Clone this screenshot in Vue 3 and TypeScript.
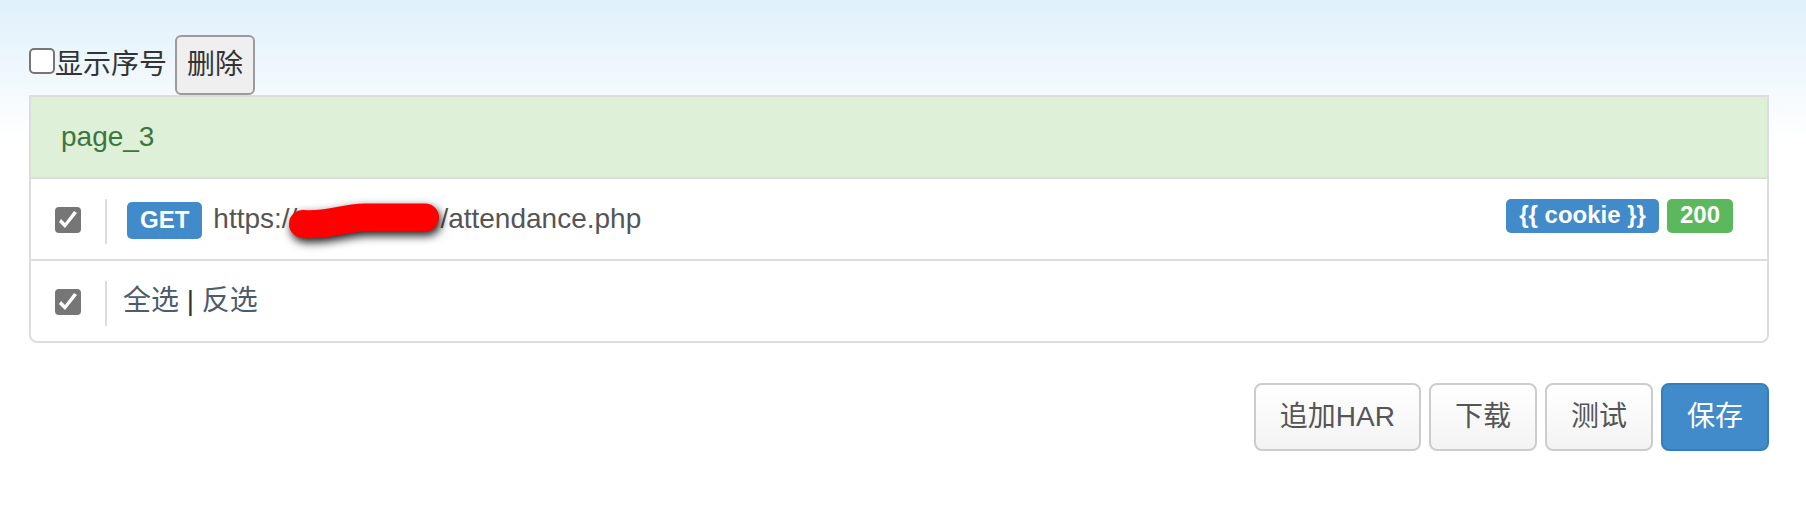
<script setup lang="ts">
import { computed, ref } from 'vue'

interface Entry {
  checked: boolean
  method: string
  scheme: string
  path: string
  variables: string[]
  status: number
}

const showIndex = ref(false)
const pageName = 'page_3'
const entries = ref<Entry[]>([
  {
    checked: true,
    method: 'GET',
    scheme: 'https://',
    path: '/attendance.php',
    variables: ['{{ cookie }}'],
    status: 200,
  },
])

const allChecked = computed({
  get: () => entries.value.every((e) => e.checked),
  set: (value: boolean) => setAll(value),
})

function setAll(value: boolean) {
  entries.value.forEach((e) => (e.checked = value))
}

function invert() {
  entries.value.forEach((e) => (e.checked = !e.checked))
}

function removeChecked() {
  entries.value = entries.value.filter((e) => !e.checked)
}
</script>

<template>
  <main class="editor">
    <div class="toolbar">
      <label class="toggle"><input v-model="showIndex" class="check" type="checkbox" /><span>显示序号</span></label>
      <button class="remove" type="button" @click="removeChecked">删除</button>
    </div>

    <section class="panel">
      <h1 class="row heading">{{ pageName }}</h1>

      <div v-for="(entry, i) in entries" :key="i" class="row">
        <span class="pick"><input v-model="entry.checked" class="check" type="checkbox" :aria-label="entry.method + ' ' + entry.path" /></span>
        <div class="request">
          <span class="badge method">{{ entry.method }}</span>
          <span class="url">
            <span>{{ entry.scheme }}</span>
            <span class="host">
              <svg class="marker" viewBox="0 0 160 60" aria-hidden="true">
                <path d="M20 35 C46 37 58 29 82 28.500 H142" />
              </svg>
            </span>
            <span>{{ entry.path }}</span>
          </span>
        </div>
        <div class="tags">
          <span v-for="name in entry.variables" :key="name" class="badge">{{ name }}</span>
          <span class="badge ok">{{ entry.status }}</span>
        </div>
      </div>

      <div class="row">
        <span class="pick"><input v-model="allChecked" class="check" type="checkbox" aria-label="全选" /></span>
        <div class="select-links">
          <a href="#" @click.prevent="setAll(true)">全选</a> | <a href="#" @click.prevent="invert">反选</a>
        </div>
      </div>
    </section>

    <div class="actions">
      <button class="btn" type="button">追加HAR</button>
      <button class="btn" type="button">下载</button>
      <button class="btn" type="button">测试</button>
      <button class="btn primary" type="button">保存</button>
    </div>
  </main>
</template>

<style>
body {
  background: #fff linear-gradient(#dff0fb, #fff 140px) no-repeat;
}
</style>

<style scoped>
.editor {
  padding: 35px 37px 60px 29px;
  min-height: 100vh;
  box-sizing: border-box;
  color: #333;
  font: 28px/40px "Liberation Sans", "Noto Sans CJK SC", sans-serif;
}

button {
  font: inherit;
  cursor: pointer;
}

.check {
  appearance: none;
  box-sizing: border-box;
  width: 26px;
  height: 26px;
  margin: 0;
  border: 2px solid #767676;
  border-radius: 5px;
  background: #fff;
}

.check:checked {
  border-width: 0;
  border-radius: 4px;
  background: #767676;
}

.check:checked::before {
  content: "";
  display: block;
  height: 26px;
  background: #fff;
  clip-path: polygon(4px 15px, 6px 12px, 10px 16px, 19px 4px, 22px 6px, 10px 21px);
}

.toolbar {
  display: flex;
  gap: 8px;
}

.toggle {
  display: flex;
  align-items: center;
}

.toggle .check {
  margin-bottom: 8px;
}

.remove {
  height: 60px;
  padding: 0 10px;
  border: 2px solid #9b9b9b;
  border-radius: 6px;
  background: #efefef;
  color: #333;
}

.panel {
  border: 2px solid #ddd;
  border-radius: 0 0 8px 8px;
  background: #fff;
}

.row {
  display: flex;
  padding: 20px 34px 20px 24px;
}

.row + .row {
  border-top: 2px solid #ddd;
}

.heading {
  margin: 0;
  padding: 20px 30px;
  background: #dff0d8;
  color: #3c763d;
  font-size: 28px;
  font-weight: 400;
}

.pick {
  display: flex;
  box-sizing: border-box;
  height: 45px;
  margin-bottom: -5px;
  padding: 8px 24px 0 0;
  border-right: 2px solid #ddd;
}

.request {
  display: flex;
  flex: 1;
  gap: 11px;
  padding-left: 20px;
  color: #555;
}

.badge {
  height: 34px;
  padding: 0 13px;
  border-radius: 5px;
  background: #428bca;
  color: #fff;
  font-size: 24px;
  font-weight: 700;
  line-height: 32px;
}

.method {
  height: 37px;
  margin-top: 3px;
  line-height: 36px;
}

.ok {
  background: #5cb85c;
}

.url {
  display: flex;
}

.host {
  position: relative;
  width: 143px;
}

.marker {
  position: absolute;
  top: -10px;
  left: -14px;
  width: 160px;
  height: 60px;
  overflow: visible;
  filter: drop-shadow(2px 4px 5px rgba(0, 0, 0, 0.9));
}

.marker path {
  fill: none;
  stroke: #f00;
  stroke-width: 28;
  stroke-linecap: round;
}

.tags {
  display: flex;
  gap: 8px;
}

.select-links {
  padding-left: 16px;
}

.select-links a {
  color: #4c5b6e;
  text-decoration: none;
}

.actions {
  display: flex;
  justify-content: flex-end;
  gap: 8px;
  margin-top: 40px;
}

.btn {
  height: 68px;
  padding: 0 24px;
  border: 2px solid #ccc;
  border-radius: 8px;
  background: linear-gradient(#fff, #f3f3f3);
  color: #555;
}

.primary {
  border-color: #357ebd;
  background: #428bca;
  color: #fff;
}
</style>
